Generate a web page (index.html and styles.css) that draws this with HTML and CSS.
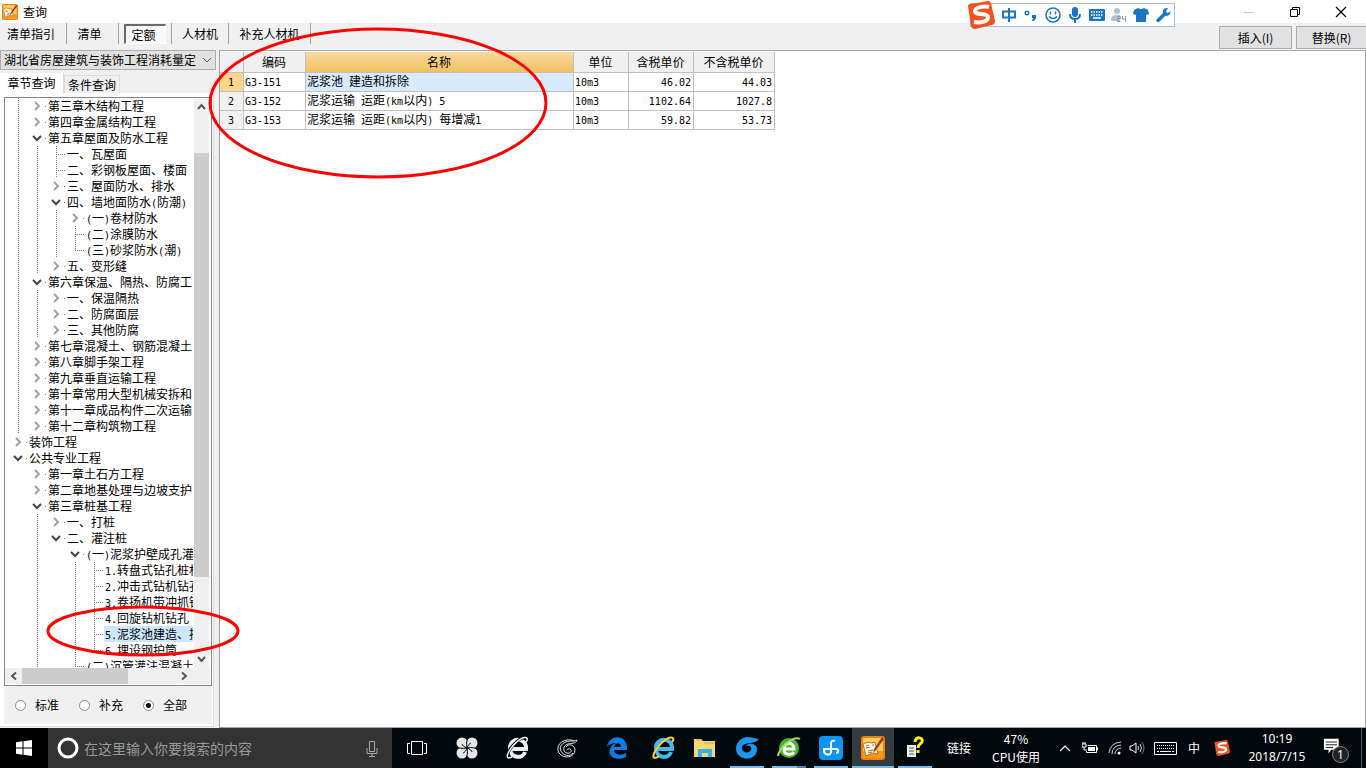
FILE: index.html
```html
<!DOCTYPE html>
<html lang="zh-CN">
<head>
<meta charset="utf-8">
<title>查询</title>
<link rel="stylesheet" href="styles.css">
</head>
<body>
<svg class="defs" aria-hidden="true">
  <symbol id="right" viewBox="0 0 19 16"><path d="M7 4l4 4-4 4" fill="none" stroke="#a0a0a0" stroke-width="2"/><path d="M17 8h1v1h-1z" fill="#808080"/></symbol>
  <symbol id="down" viewBox="0 0 19 16"><path d="M5 6l4 4 4-4" fill="none" stroke="#444" stroke-width="2"/><path d="M17 8h1v1h-1z" fill="#808080"/></symbol>
  <symbol id="book" viewBox="0 0 24 24">
    <rect x="0" y="0" width="24" height="24" rx="3" fill="#f08010"/><rect x="2" y="2" width="20" height="20" rx="1" fill="#ffd060"/>
    <path d="M2 15h20v7H2z" fill="#f59a18"/>
    <path d="M2 8l5-2 3 1 4-1 3 12-5-1-7 3z" fill="#fffbe8" stroke="#c07010"/>
    <path d="M5 10l3-1M11 9l2 0M5 12l4-1M7 15l5-1M7 17l4-1" stroke="#9a7040"/>
    <path d="M21 1l-8 12-1 4 3-3 8-11z" fill="#a83808"/>
  </symbol>
  <symbol id="sogou" viewBox="0 0 28 28">
    <path d="M1 5Q1 3 4 3l17-3q2 0 3 2l4 18q0 3-3 4L8 28q-3 0-4-3z" fill="#f4511e"/>
    <path d="M22 6c-5-1-14 0-14 4 0 5 14 1 13 7-1 4-8 5-14 4" fill="none" stroke="#fff" stroke-width="4"/>
  </symbol>
</svg>
<div class="desktop">
  <main class="window">
    <header class="titlebar">
      <svg class="appicon" viewBox="0 0 24 24"><use href="#book"/></svg>
      <h1>查询</h1>
      <div class="controls">
        <button aria-label="最小化"><svg viewBox="0 0 12 12"><path d="M1 6.500h10" stroke="#c8c8c8"/></svg></button>
        <button aria-label="还原"><svg viewBox="0 0 12 12"><path d="M1.500 3.500h7v7h-7zM3.500 3V1.500h7v7H9" fill="none" stroke="#000"/></svg></button>
        <button aria-label="关闭"><svg viewBox="0 0 12 12"><path d="M1 1l10 10M11 1L1 11" stroke="#000" stroke-width="1.200"/></svg></button>
      </div>
    </header>

    <nav class="toolbar">
      <button class="mode wide">清单指引</button>
      <button class="mode near">清单</button>
      <button class="mode on"><span>定额</span></button>
      <button class="mode mid">人材机</button>
      <button class="mode long">补充人材机</button>
      <div class="actions">
        <button>插入(I)</button>
        <button class="last">替换(R)</button>
      </div>
    </nav>

    <div class="work">
      <aside class="side">
        <div class="combo">
          <select aria-label="定额库"><option>湖北省房屋建筑与装饰工程消耗量定</option></select>
          <svg viewBox="0 0 12 12"><path d="M2 4l4 4 4-4" fill="none" stroke="#555"/></svg>
        </div>
        <div class="tabs"><button class="tab current">章节查询</button><button class="tab">条件查询</button></div>
        <div class="page">
          <div class="treebox">
            <div class="view">
              <div class="tree">
                <div class="row"><i class="v"></i><svg><use href="#right"/></svg><span>第三章木结构工程</span></div>
                <div class="row"><i class="v"></i><svg><use href="#right"/></svg><span>第四章金属结构工程</span></div>
                <div class="row"><i class="v"></i><svg><use href="#down"/></svg><span>第五章屋面及防水工程</span></div>
                <div class="row"><i class="v"></i><i class="v"></i><i class="v t"></i><span>一、瓦屋面</span></div>
                <div class="row"><i class="v"></i><i class="v"></i><i class="v t"></i><span>二、彩钢板屋面、楼面</span></div>
                <div class="row"><i class="v"></i><i class="v"></i><svg><use href="#right"/></svg><span>三、屋面防水、排水</span></div>
                <div class="row"><i class="v"></i><i class="v"></i><svg><use href="#down"/></svg><span>四、墙地面防水<b>(</b>防潮<b>)</b></span></div>
                <div class="row"><i class="v"></i><i class="v"></i><i class="v"></i><svg><use href="#right"/></svg><span><b>(</b>一<b>)</b>卷材防水</span></div>
                <div class="row"><i class="v"></i><i class="v"></i><i class="v"></i><i class="v t"></i><span><b>(</b>二<b>)</b>涂膜防水</span></div>
                <div class="row"><i class="v"></i><i class="v"></i><i class="v"></i><i class="v l"></i><span><b>(</b>三<b>)</b>砂浆防水<b>(</b>潮<b>)</b></span></div>
                <div class="row"><i class="v"></i><i class="v"></i><svg><use href="#right"/></svg><span>五、变形缝</span></div>
                <div class="row"><i class="v"></i><svg><use href="#down"/></svg><span>第六章保温、隔热、防腐工</span></div>
                <div class="row"><i class="v"></i><i class="v"></i><svg><use href="#right"/></svg><span>一、保温隔热</span></div>
                <div class="row"><i class="v"></i><i class="v"></i><svg><use href="#right"/></svg><span>二、防腐面层</span></div>
                <div class="row"><i class="v"></i><i class="v"></i><svg><use href="#right"/></svg><span>三、其他防腐</span></div>
                <div class="row"><i class="v"></i><svg><use href="#right"/></svg><span>第七章混凝土、钢筋混凝土</span></div>
                <div class="row"><i class="v"></i><svg><use href="#right"/></svg><span>第八章脚手架工程</span></div>
                <div class="row"><i class="v"></i><svg><use href="#right"/></svg><span>第九章垂直运输工程</span></div>
                <div class="row"><i class="v"></i><svg><use href="#right"/></svg><span>第十章常用大型机械安拆和</span></div>
                <div class="row"><i class="v"></i><svg><use href="#right"/></svg><span>第十一章成品构件二次运输</span></div>
                <div class="row"><i class="v"></i><svg><use href="#right"/></svg><span>第十二章构筑物工程</span></div>
                <div class="row"><svg><use href="#right"/></svg><span>装饰工程</span></div>
                <div class="row"><svg><use href="#down"/></svg><span>公共专业工程</span></div>
                <div class="row"><i></i><svg><use href="#right"/></svg><span>第一章土石方工程</span></div>
                <div class="row"><i></i><svg><use href="#right"/></svg><span>第二章地基处理与边坡支护</span></div>
                <div class="row"><i></i><svg><use href="#down"/></svg><span>第三章桩基工程</span></div>
                <div class="row"><i></i><i class="v"></i><svg><use href="#right"/></svg><span>一、打桩</span></div>
                <div class="row"><i></i><i class="v"></i><svg><use href="#down"/></svg><span>二、灌注桩</span></div>
                <div class="row"><i></i><i class="v"></i><i></i><svg><use href="#down"/></svg><span><b>(</b>一<b>)</b>泥浆护壁成孔灌</span></div>
                <div class="row"><i></i><i class="v"></i><i></i><i class="v"></i><i class="v t"></i><span><b>1.</b>转盘式钻孔桩机</span></div>
                <div class="row"><i></i><i class="v"></i><i></i><i class="v"></i><i class="v t"></i><span><b>2.</b>冲击式钻机钻孔</span></div>
                <div class="row"><i></i><i class="v"></i><i></i><i class="v"></i><i class="v t"></i><span><b>3.</b>卷扬机带冲抓锥</span></div>
                <div class="row"><i></i><i class="v"></i><i></i><i class="v"></i><i class="v t"></i><span><b>4.</b>回旋钻机钻孔</span></div>
                <div class="row"><i></i><i class="v"></i><i></i><i class="v"></i><i class="v t"></i><span class="picked"><b>5.</b>泥浆池建造、拆</span></div>
                <div class="row"><i></i><i class="v"></i><i></i><i class="v"></i><i class="v l"></i><span><b>6.</b>埋设钢护筒</span></div>
                <div class="row"><i></i><i class="v"></i><i></i><i class="v l"></i><span><b>(</b>二<b>)</b>沉管灌注混凝土</span></div>
              </div>
              <div class="vbar">
                <svg viewBox="0 0 15 17"><path d="M4 11l3.500-4 3.500 4" fill="none" stroke="#555" stroke-width="2"/></svg>
                <div class="before"></div><div class="thumb"></div><div class="after"></div>
                <svg viewBox="0 0 15 17"><path d="M4 6l3.500 4L11 6" fill="none" stroke="#555" stroke-width="2"/></svg>
              </div>
            </div>
            <div class="hbar">
              <svg viewBox="0 0 17 15"><path d="M11 4L7 7.500l4 3.500" fill="none" stroke="#555" stroke-width="2"/></svg>
              <div class="thumb"></div><div class="after"></div>
              <svg viewBox="0 0 17 15"><path d="M6 4l4 3.500L6 11" fill="none" stroke="#555" stroke-width="2"/></svg>
            </div>
          </div>
          <div class="scope">
            <label><input type="radio" name="scope">标准</label>
            <label><input type="radio" name="scope">补充</label>
            <label><input type="radio" name="scope" checked>全部</label>
          </div>
        </div>
      </aside>

      <section class="grid">
        <table>
          <colgroup><col class="c-no"><col class="c-code"><col class="c-name"><col class="c-unit"><col class="c-tax"><col class="c-net"></colgroup>
          <thead><tr><th></th><th>编码</th><th class="sorted">名称</th><th>单位</th><th>含税单价</th><th>不含税单价</th></tr></thead>
          <tbody>
            <tr><th class="hot"><b>1</b></th><td><b>G3-151</b></td><td class="sel">泥浆池<b> </b>建造和拆除</td><td><b>10m3</b></td><td class="num"><b>46.02</b></td><td class="num"><b>44.03</b></td></tr>
            <tr><th><b>2</b></th><td><b>G3-152</b></td><td>泥浆运输<b> </b>运距<b>(km</b>以内<b>) 5</b></td><td><b>10m3</b></td><td class="num"><b>1102.64</b></td><td class="num"><b>1027.8</b></td></tr>
            <tr><th><b>3</b></th><td><b>G3-153</b></td><td>泥浆运输<b> </b>运距<b>(km</b>以内<b>) </b>每增减<b>1</b></td><td><b>10m3</b></td><td class="num"><b>59.82</b></td><td class="num"><b>53.73</b></td></tr>
          </tbody>
        </table>
      </section>
    </div>
  </main>

  <footer class="taskbar">
    <button class="start" aria-label="开始"><svg width="16" height="16" viewBox="0 0 16 16"><path d="M0 2.300l6.500-1v6.200H0zM7.500 1.200L16 0v7.500H7.500zM0 8.500h6.500v6.200l-6.500-1zM7.500 8.500H16V16l-8.500-1.200z" fill="#fff"/></svg></button>
    <div class="search">
      <svg width="22" height="22" viewBox="0 0 22 22"><circle cx="11" cy="11" r="9" fill="none" stroke="#fff" stroke-width="3"/></svg>
      <input type="text" aria-label="搜索" placeholder="在这里输入你要搜索的内容">
      <svg width="12" height="17" viewBox="0 0 12 17"><path d="M3.500 1.500h5v10h-5zM1 8v5.500h10V8M6 13.500V16M3 16.500h6" fill="none" stroke="#aaa"/></svg>
    </div>
    <div class="apps">
      <button class="roomy" aria-label="任务视图"><svg viewBox="0 0 24 24"><path d="M6.500 5.500h11v13h-11zM5 7.500H2.500v10H5M19 7.500h2.500v10H19" fill="none" stroke="#fff"/></svg></button>
      <button class="roomy" aria-label="浏览器"><svg viewBox="0 0 24 24"><g fill="#e6e6e6"><circle cx="7" cy="7" r="5.500"/><circle cx="17" cy="7" r="5.500"/><circle cx="7" cy="17" r="5.500"/><circle cx="17" cy="17" r="5.500"/><path d="M7 7h10v10H7z"/></g><path d="M12 12C7 13 4 12 2 11M12 12c-1-5 0-8 1-10M12 12c5-1 8 0 10 1M12 12c1 5 0 8-1 10M12 12C9 11 7 9 7 8M12 12c1-3 3-5 4-5M12 12c3 1 5 3 5 4M12 12c-1 3-3 5-4 5" fill="none" stroke="#02090d"/></svg></button>
      <button class="roomy" aria-label="浏览器"><svg viewBox="0 0 24 24"><path d="M6 13h15c1-12-16-12-16-1s13 11 15 4" fill="none" stroke="#eee" stroke-width="4"/><path d="M3 22C-1 17 15-1 22 2" fill="none" stroke="#02090d" stroke-width="3"/><path d="M3 22C-1 18 15-1 22 2M3 22q3 0 5-2M22 2q1 2-1 4" fill="none" stroke="#eee" stroke-width="1.500"/></svg></button>
      <button class="roomy" aria-label="广联达"><svg viewBox="0 0 24 24"><path d="M22 4c-3 2-6-1-10 0C4 5 1 12 4 17c5 7 16 4 16-3 0-5-7-7-9-3M22 4c-1 4-6 3-9 4-5 1-6 8-1 9 3 1 5-2 4-3-1-2-4-1-4 0M19 5C9 4 3 10 6 15c2 5 9 6 12 2" fill="none" stroke="#e4e4e4"/></svg></button>
      <button class="roomy" aria-label="Edge"><svg viewBox="0 0 24 24"><path d="M2 11C4-2 22-2 22 12v2H9c0 5 7 6 12 3v4C11 26 2 20 5 13c1-3 3-5 6-6-4 0-7 1-9 4zM9 11h7c0-5-6-5-7 0z" fill="#0a7ee0"/></svg></button>
      <button aria-label="Internet Explorer"><svg viewBox="0 0 24 24"><path d="M6 13h15c1-12-16-12-16-1s13 11 15 4" fill="none" stroke="#48b8f0" stroke-width="4"/><path d="M3 22C-1 18 15-1 22 2M3 22q3 0 5-2M22 2q1 2-1 4" fill="none" stroke="#f8d030" stroke-width="2"/></svg></button>
      <button aria-label="资源管理器"><svg viewBox="0 0 24 24"><path d="M1 3h7l2 2h12v16H1z" fill="#f8d775"/><path d="M3 4h5M11 7h11" stroke="#d9a23a"/><path d="M5 21v-8h14v8h-4v-4H9v4z" fill="#38b0e8"/></svg></button>
      <button class="open" aria-label="广联达"><svg viewBox="0 0 24 24"><path d="M24 3c-4 0-7-2-12-2C3 2-1 11 2 17c5 9 20 7 20-4 0-5-8-7-11-3 4-1 6 1 5 4-2 4-9 3-9-2 0-7 13-3 17-9z" fill="#1c98ee"/></svg></button>
      <button class="open split" aria-label="浏览器"><svg viewBox="0 0 24 24"><circle cx="12" cy="12" r="10" fill="#48b828"/><path d="M8 13h9c0-8-10-7-10 0s8 6 10 3" fill="none" stroke="#fff" stroke-width="3"/><path d="M1 20C2 12 17-1 23 3" fill="none" stroke="#9be070" stroke-width="2"/></svg></button>
      <button class="open" aria-label="同步"><svg viewBox="0 0 24 24"><rect width="24" height="24" rx="4" fill="#0a94f4"/><path d="M16 5c-3-1-4 0-4 3v8c0 4-7 3-7-1v-2h12c3 0 3 4 0 4" fill="none" stroke="#fff" stroke-width="2"/></svg></button>
      <button class="open active" aria-label="查询"><svg viewBox="0 0 24 24"><use href="#book"/></svg></button>
      <button class="open" aria-label="帮助"><svg viewBox="0 0 24 24"><path d="M4 9h9v12H4z" fill="#eee"/><path d="M6 12h5M6 15h5M6 18h5" stroke="#555"/><path d="M12 6c0-6 9-5 7 0-1 2-4 2-4 6M15 14v3" fill="none" stroke="#fff000" stroke-width="3"/></svg></button>
    </div>
    <div class="tray">
      <span class="links">链接</span>
      <span class="cpu">47%<br>CPU使用</span>
      <svg class="t-up" viewBox="0 0 12 8"><path d="M1 7l5-5 5 5" fill="none" stroke="#fff" stroke-width="1.200"/></svg>
      <svg class="t-bat" viewBox="0 0 16 12"><path d="M5.500 3.500h9v7h-10V9M14.500 5.500h1v3M0 2h4M1 0v2M3 0v2M0 2v3h4V2M2 5v3h3" fill="none" stroke="#fff"/><path d="M6 5h7v4H6z" fill="#fff"/></svg>
      <svg class="t-wifi" viewBox="0 0 14 14"><path d="M1 12Q2 2 13 1M4 13q0-8 9-9M7 13q0-5 6-6" fill="none" stroke="#ccc"/><circle cx="11" cy="12" r="1.500" fill="#fff"/></svg>
      <svg class="t-vol" viewBox="0 0 16 14"><path d="M1 5h2l4-3v10L3 9H1z" fill="none" stroke="#fff"/><path d="M9 5q1 2 0 4M11 3q3 4 0 8" fill="none" stroke="#ddd"/><path d="M13 1q4 6 0 12" fill="none" stroke="#777"/></svg>
      <svg class="t-key" viewBox="0 0 23 13"><path d="M.5.500h22v12H.5z" fill="none" stroke="#fff"/><path d="M3 3.500h17M3 6.500h17" stroke="#fff" stroke-dasharray="1 1"/><path d="M3 9.500h2M6 9.500h11M18 9.500h2" stroke="#fff"/></svg>
      <span class="t-lang">中</span>
      <svg class="t-sogou" viewBox="0 0 28 28"><use href="#sogou"/></svg>
      <time>10:19<br>2018/7/15</time>
      <button class="notice" aria-label="通知"><svg viewBox="0 0 26 26"><path d="M1 3h16v12H9l-3 4v-4H1z" fill="#fff"/><path d="M3 6.500h12M3 9.500h12M3 12.500h8" stroke="#111"/></svg><em>1</em></button>
    </div>
  </footer>

  <div class="ime">
    <svg class="ime-logo" viewBox="0 0 28 28"><use href="#sogou"/></svg>
    <svg viewBox="0 0 16 16"><path d="M2 4.500h12v6H2zM8 1v14" fill="none" stroke="#1c74c4" stroke-width="2"/></svg>
    <svg viewBox="0 0 16 16"><circle cx="4" cy="6" r="1.800" fill="none" stroke="#1c74c4" stroke-width="1.400"/><path d="M9 8h4v3l-2 3H9l1-3H9z" fill="#1c74c4"/></svg>
    <svg viewBox="0 0 16 16"><circle cx="8" cy="8" r="7" fill="none" stroke="#1c74c4" stroke-width="1.600"/><path d="M5.500 4.500v3M10.500 4.500v3M4 9.500q4 4 8 0" fill="none" stroke="#1c74c4" stroke-width="1.400"/></svg>
    <svg viewBox="0 0 16 16"><rect x="5" y="0" width="6" height="10" rx="3" fill="#1c74c4"/><path d="M3 7q0 5 5 5t5-5M8 12v4" fill="none" stroke="#1c74c4" stroke-width="2"/></svg>
    <svg viewBox="0 0 16 16"><rect y="2" width="16" height="12" rx="1" fill="#1c74c4"/><path d="M2 5h12M2 8h12" stroke="#fff" stroke-width="1.500" stroke-dasharray="1.500 1"/><path d="M4 11h8" stroke="#fff" stroke-width="1.500"/></svg>
    <svg viewBox="0 0 16 16"><circle cx="6" cy="4" r="3" fill="#b4bfd0"/><path d="M0 13q0-5 6-5h3v6H0z" fill="#b4bfd0"/><path d="M6.500 9.500h3v2h-3v3h3M11.500 9v3h3M14.500 9v6" fill="none" stroke="#8996ac"/></svg>
    <svg viewBox="0 0 16 16"><path d="M1 3l4-2q3 2 6 0l4 2 1 4-3 1v7H3V8L0 7z" fill="#1c74c4"/></svg>
    <svg viewBox="0 0 16 16"><path d="M1 13l7-7q-1-4 3-5l2 0-2 3 1 2 3-1 0-2q2 6-5 6l-6 6q-2 1-3-2z" fill="#1c74c4"/></svg>
  </div>
  <svg class="marks" width="560" height="670" viewBox="0 0 560 670" aria-hidden="true">
    <ellipse cx="378" cy="103" rx="168" ry="74" fill="none" stroke="#f00" stroke-width="3"/>
    <ellipse cx="143" cy="631" rx="95" ry="24" fill="none" stroke="#f00" stroke-width="3"/>
  </svg>
</div>
</body>
</html>
```
FILE: styles.css
```css
* { box-sizing: border-box; }
body { margin: 0; font: 12px/16px "Noto Sans CJK SC", sans-serif; color: #000; }
button, input, select { font: inherit; color: inherit; margin: 0; }
button { border: 0; padding: 0; background: none; white-space: nowrap; }
svg { display: block; flex: none; }
b { font: 10px/16px "DejaVu Sans Mono", monospace; white-space: pre; }
.defs { position: absolute; width: 0; height: 0; }
.desktop { position: relative; display: flex; flex-direction: column; height: 100vh; overflow: hidden; }
.window { flex: 1; min-height: 0; display: flex; flex-direction: column; background: #f0f0f0; }

.titlebar { display: flex; align-items: center; height: 23px; padding-left: 2px; background: #fff; }
.appicon { width: 16px; height: 16px; }
.titlebar h1 { margin: 0 0 0 5px; font-size: 12px; line-height: 16px; font-weight: 400; }
.controls { display: flex; margin-left: auto; padding-right: 2px; }
.controls button { width: 46px; height: 20px; display: flex; align-items: center; justify-content: center; }
.controls svg { width: 12px; height: 12px; }

.toolbar { display: flex; height: 27px; align-items: flex-start; }
.mode { width: 52px; height: 21px; border-right: 1px solid #a0a0a0; }
.mode.wide { width: 67px; padding-right: 4px; }
.mode.near { padding-right: 6px; }
.mode.on { width: 53px; }
.mode.on span { display: block; width: 42px; height: 20px; margin: 1px 0 0 5px; padding-right: 4px; border: 1px solid #fff; border-top: 2px solid #696969; border-left: 2px solid #696969; background: #f8f8f8; line-height: 18px; }
.mode.mid { width: 57px; }
.mode.long { width: 82px; }
.actions { display: flex; gap: 4px; margin-left: auto; padding-top: 3px; }
.actions button { width: 73px; height: 23px; border: 1px solid #adadad; background: #e1e1e1; }
.actions .last { width: 70px; border-right: 0; }

.work { flex: 1; min-height: 0; display: flex; }
.side { width: 219px; display: flex; flex-direction: column; }
.combo { display: grid; align-items: center; width: 216px; margin-bottom: 3px; }
.combo select, .combo svg { grid-area: 1 / 1; }
.combo select { appearance: none; width: 100%; height: 20px; padding: 0 0 0 3px; border: 1px solid #adadad; border-radius: 0; background: #e1e1e1; line-height: 16px; }
.combo svg { width: 12px; height: 12px; justify-self: end; margin-right: 3px; }
.tabs { display: flex; align-items: flex-end; height: 20px; }
.tab { width: 56px; height: 18px; border: 1px solid #dcdcdc; border-bottom: 0; }
.tab.current { width: 64px; height: 20px; background: #fff; border-left: 0; border-top: 0; }
.page { flex: 1; min-height: 0; width: 214px; display: flex; flex-direction: column; margin-bottom: 1px; padding: 4px 1px 2px 4px; border: 1px solid #dcdcdc; border-left: 0; border-top: 0; background: #fff; }
.treebox { flex: 1; min-height: 0; display: flex; flex-direction: column; padding: 0 1px 1px 0; border: 1px solid #828790; }
.view { flex: 1; min-height: 0; display: flex; }
.tree { flex: 1; min-width: 0; overflow: hidden; padding-left: 4px; margin-right: 1px; }
.row { display: flex; height: 16px; white-space: nowrap; }
.row span { padding: 0 1px; flex: none; }
.row .picked { background: #cce8ff; }
.row svg { width: 19px; height: 16px; }
.row i { width: 19px; height: 16px; flex: none; background-repeat: no-repeat; }
.v { background-image: repeating-linear-gradient(#808080 0 1px, transparent 1px 2px); background-size: 1px 16px; background-position: 9px 0; }
.row .t, .row .l { background-image: repeating-linear-gradient(#808080 0 1px, transparent 1px 2px), repeating-linear-gradient(90deg, #808080 0 1px, transparent 1px 2px); background-size: 1px 16px, 9px 1px; background-position: 9px 0, 9px 8px; }
.row .l { background-size: 1px 8px, 9px 1px; }
.vbar { width: 16px; display: flex; flex-direction: column; background: #f0f0f0; border-right: 1px solid #fff; }
.vbar svg { width: 15px; height: 17px; }
.vbar .before { flex: 38; }
.vbar .thumb { flex: 426; }
.vbar .after { flex: 74; }
.thumb { background: #cdcdcd; }
.hbar { height: 16px; display: flex; align-items: stretch; padding-right: 17px; background: #f0f0f0; }
.hbar svg { width: 17px; height: 16px; }
.hbar .thumb { flex: 105; }
.hbar .after { flex: 48; }
.scope { display: flex; gap: 10px; align-items: center; height: 38px; padding-left: 11px; background: #f0f0f0; }
.scope label { display: flex; align-items: center; gap: 9px; width: 54px; white-space: nowrap; }
.scope input { appearance: none; flex: none; width: 11px; height: 11px; border: 1px solid #888; border-radius: 50%; background: #fff; }
.scope input:checked { background: radial-gradient(circle, #000 0 2px, #fff 3px); }

.grid { flex: 1; min-width: 0; padding-top: 1px; border: 1px solid #a0a0a0; border-top-color: #a9a9b0; background: #fff; }
table { width: 555px; table-layout: fixed; border-spacing: 0; }
.c-no { width: 24px; }
.c-code { width: 62px; }
.c-name { width: 268px; }
.c-unit { width: 55px; }
.c-tax { width: 65px; }
.c-net { width: 81px; }
th, td { height: 19px; padding: 0 2px 0 1px; border: 0 solid #c0c0c0; border-width: 0 1px 1px 0; font-weight: 400; line-height: 16px; white-space: nowrap; text-align: left; }
th { background: #f0f0f0; text-align: center; }
thead th { height: 21px; }
.sorted { background: linear-gradient(#f9d99f, #f0c160); }
.hot { background: #ffd58d; }
.sel { background: #d8eaf9; }
.num { text-align: right; }

.taskbar { display: flex; height: 40px; background: #02090d; color: #fff; }
.taskbar button { display: flex; align-items: center; justify-content: center; flex: none; }
.start { width: 48px; background: #000; }
.search { width: 344px; display: flex; align-items: center; gap: 5px; padding: 0 14px 0 9px; background: #333; }
.search input { flex: 1; min-width: 0; padding: 0; border: 0; background: none; font-size: 14px; line-height: 20px; }
.search input::placeholder { color: #999; opacity: 1; }
.apps { display: flex; }
.apps button { position: relative; width: 42px; }
.apps .roomy { width: 50px; }
.apps svg { width: 24px; height: 24px; }
.apps .open::after { content: ""; position: absolute; bottom: 0; left: 4px; right: 4px; height: 2px; background: #76b9ed; }
.apps .split::after { background: linear-gradient(90deg, #76b9ed 75%, #4f7fa6 75%); }
.apps .active { background: #343c40; }
.apps .active::after { left: 0; right: 0; }
.tray { display: flex; align-items: center; margin-left: auto; text-align: center; line-height: 18px; white-space: nowrap; }
.links { width: 24px; margin-right: 20px; }
.cpu { width: 50px; margin-right: 18px; }
.t-up { width: 12px; height: 8px; margin-right: 11px; }
.t-bat { width: 16px; height: 12px; margin-right: 10px; }
.t-wifi { width: 14px; height: 14px; margin-right: 7px; }
.t-vol { width: 16px; height: 14px; margin-right: 9px; }
.t-key { width: 23px; height: 13px; margin-right: 11px; }
.t-lang { width: 12px; margin-right: 14px; }
.t-sogou { width: 16px; height: 16px; margin-right: 16px; }
.tray time { width: 62px; font-family: "Noto Sans", sans-serif; }
.tray .notice { position: relative; width: 54px; height: 40px; border-right: 1px solid #555; margin-right: 4px; }
.notice svg { width: 24px; height: 24px; }
.notice em { position: absolute; left: 24px; top: 18px; width: 17px; height: 17px; border: 1px solid #888; border-radius: 50%; background: #222; font: 12px/15px "Noto Sans", sans-serif; }

.ime { position: absolute; left: 970px; top: 3px; display: flex; align-items: center; gap: 6px; height: 24px; padding: 0 3px 0 0; border: 1px solid #a9c0dc; background: #fff; }
.ime svg { width: 16px; height: 16px; }
.ime .ime-logo { width: 28px; height: 28px; margin-left: -4px; }
.marks { position: absolute; left: 0; top: 0; pointer-events: none; }
```
